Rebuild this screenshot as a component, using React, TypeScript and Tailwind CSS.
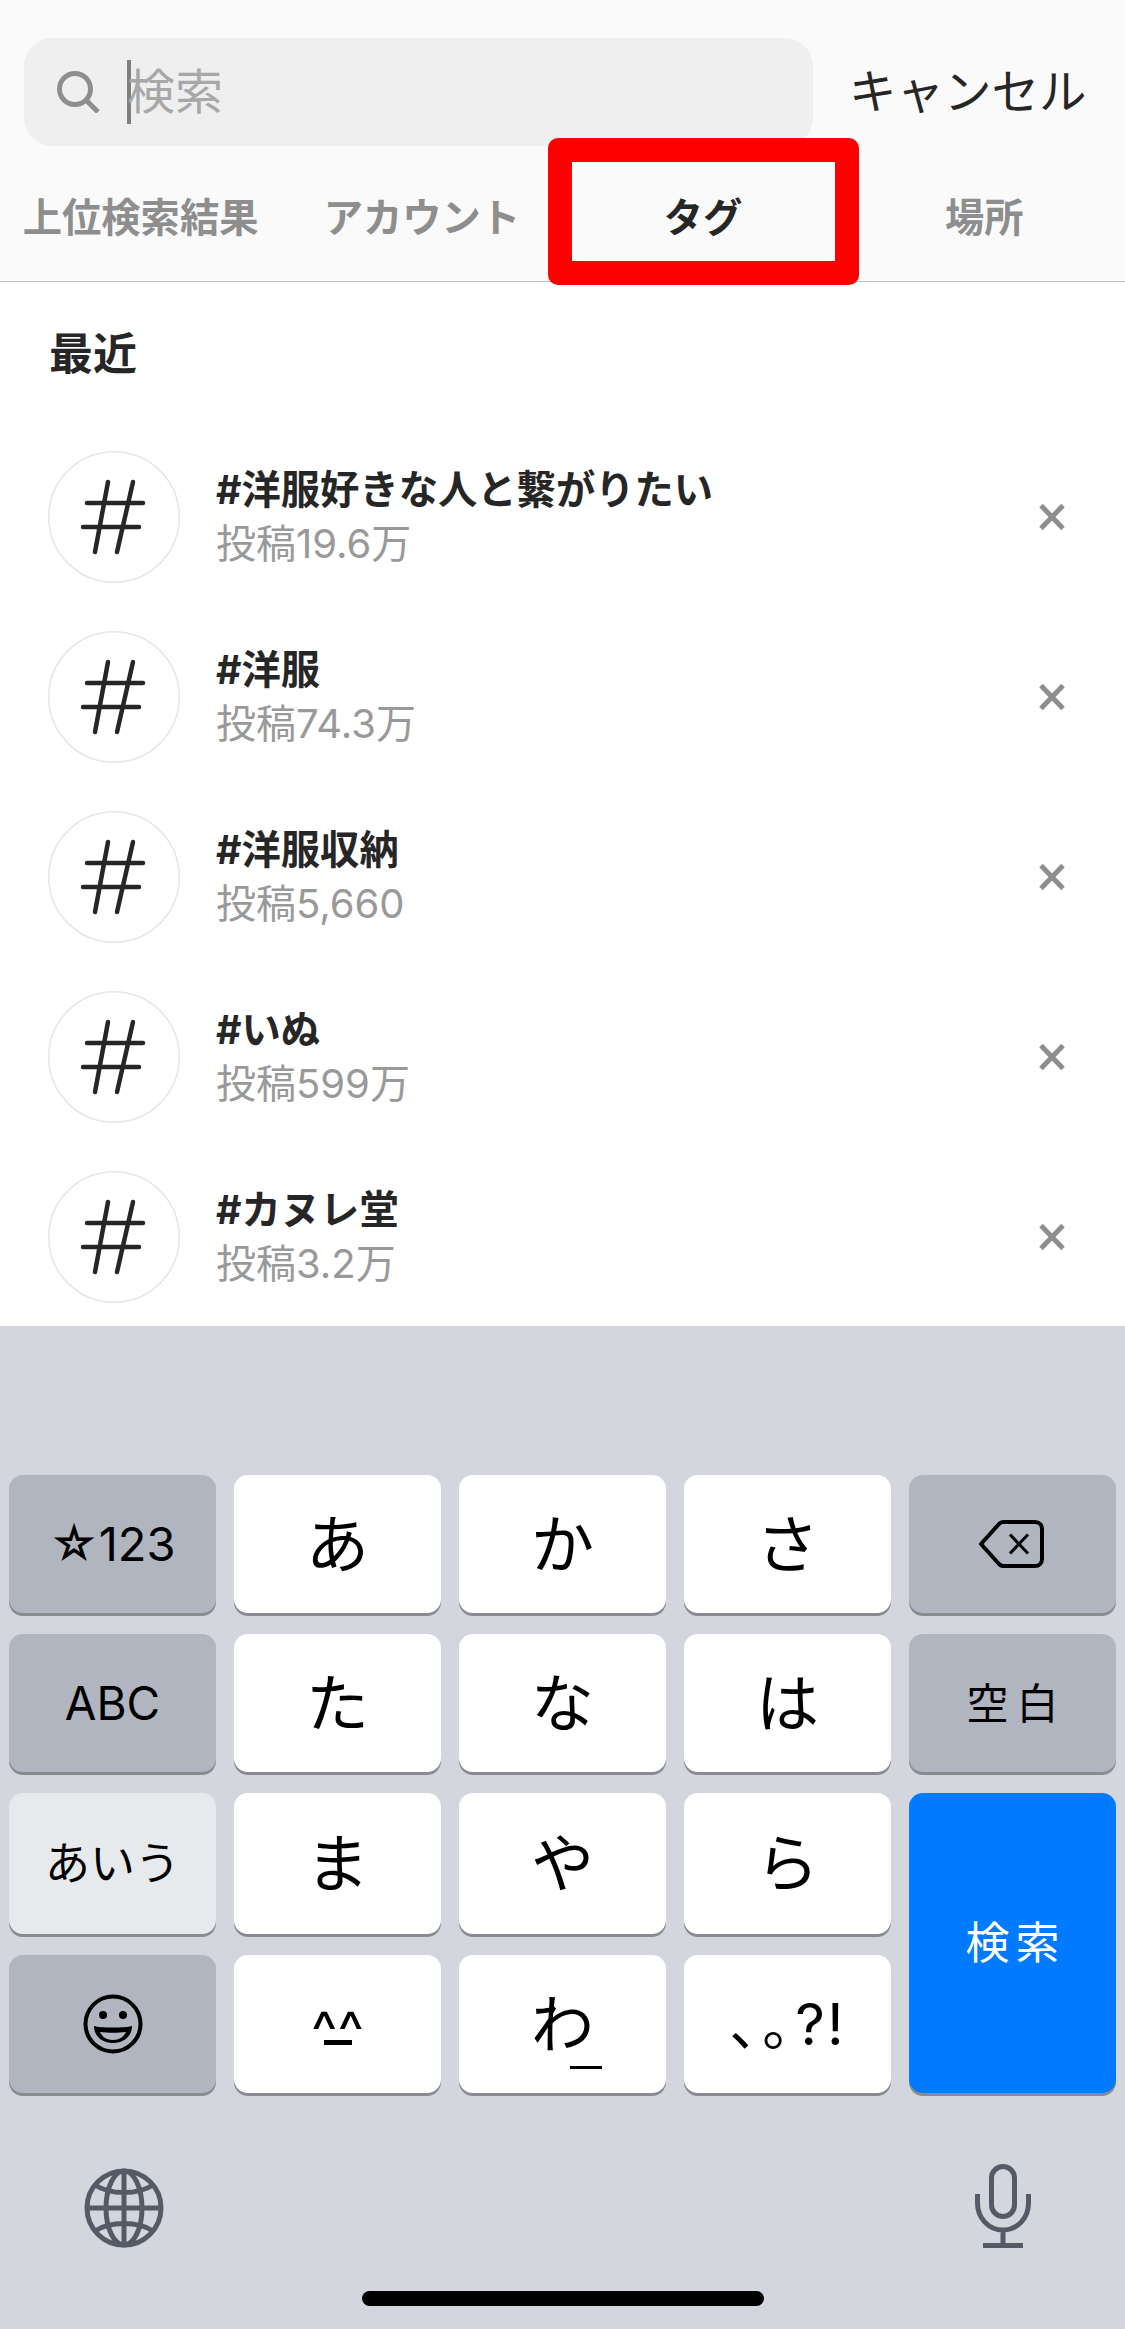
import React from 'react';

const recent = [
  { tag: '#洋服好きな人と繋がりたい', count: '投稿19.6万' },
  { tag: '#洋服', count: '投稿74.3万' },
  { tag: '#洋服収納', count: '投稿5,660' },
  { tag: '#いぬ', count: '投稿599万' },
  { tag: '#カヌレ堂', count: '投稿3.2万' },
];

const HashIcon = () => (
  <svg width="132" height="132" viewBox="0 0 132 132" fill="none" stroke="#262626" strokeWidth="4.5" strokeLinecap="round">
    <circle cx="66" cy="66" r="65.25" stroke="#e6e6e6" strokeWidth="1.5" />
    <path d="M60 31 47 101M85 31 69 101M39 52h56M35 76h56" />
  </svg>
);

const Row = ({ tag, count }: { tag: string; count: string }) => (
  <div className="flex h-[180px] items-center pl-12 pr-[60px]">
    <HashIcon />
    <div className="ml-[36px] flex-1">
      <div className="text-[39.3px] leading-[54px] font-bold text-[#262626]">{tag}</div>
      <div className="text-[40px] leading-[54px] text-[#999999]">{count}</div>
    </div>
    <svg width="26" height="26" viewBox="0 0 26 26" stroke="#8e8e8e" strokeWidth="5">
      <path d="M2 1.5 24 24.5M24 1.5 2 24.5" />
    </svg>
  </div>
);

const keyBase = 'flex items-center justify-center rounded-[14px] text-black shadow-[0_3px_0_#8a8b90]';
const whiteKey = `${keyBase} bg-white text-[63px]`;
const grayKey = `${keyBase} bg-[#b1b5c0] text-[46px]`;

export default function App() {
  return (
    <div className="relative flex h-[2329px] w-[1125px] flex-col overflow-hidden bg-white font-['Inter','Noto_Sans_CJK_JP',sans-serif]">
      <header className="h-[282px] border-b border-[#c0c0c0] bg-[#fafafa]">
        <div className="flex pl-6 pt-[38px]">
          <div className="flex h-[108px] w-[789px] items-center rounded-[28px] bg-[#efefef] pl-8">
            <svg width="44" height="42" viewBox="0 0 44 42" fill="none" stroke="#8e8e8e" strokeWidth="5">
              <circle cx="19" cy="18" r="15.5" />
              <path d="M30 29 42 41" />
            </svg>
            <div className="ml-[27px] h-16 w-1 bg-[#7f7f7f]" />
            <span className="-ml-1 text-[48px] text-[#a8a8a8]">検索</span>
          </div>
          <div className="ml-[36px] flex h-[108px] items-center text-[47.5px] text-[#262626]">キャンセル</div>
        </div>
        <div className="grid h-[135px] grid-cols-4 items-center pt-[10px] text-center text-[39.3px] font-bold text-[#8e8e8e]">
          <div>上位検索結果</div>
          <div>アカウント</div>
          <div className="text-[#262626]">タグ</div>
          <div>場所</div>
        </div>
      </header>

      {/* annotation frame over the tag tab */}
      <div className="absolute left-[548px] top-[138px] h-[147px] w-[311px] rounded-[10px] border-[24px] border-[#ff0000]" />

      <main className="h-[1044px]">
        <div className="h-[145px] pl-[49px] pt-[50px] text-[44px] leading-[44px] font-bold text-[#262626]">最近</div>
        {recent.map((r) => (
          <Row key={r.tag} tag={r.tag} count={r.count} />
        ))}
      </main>

      <section className="flex-1 bg-[#d3d6dd] px-[9px] pt-[149px]">
        <div className="grid grid-cols-[207px_207px_207px_207px_207px] grid-rows-[138px_138px_141px_138px] gap-x-[18px] gap-y-[21px]">
          <div className={`${grayKey} !text-[47px]`}>☆123</div>
          <div className={whiteKey}>あ</div>
          <div className={whiteKey}>か</div>
          <div className={whiteKey}>さ</div>
          <div className={grayKey}>
            <svg width="66" height="48" viewBox="0 0 66 48" fill="none" stroke="#000" strokeWidth="4" strokeLinejoin="round" className="-ml-1">
              <path d="M3 24 21 4c1-1 2-2 4-2h32c4 0 7 3 7 7v30c0 4-3 7-7 7H25c-2 0-3-1-4-2Z" />
              <path d="M32 14.5 50 33.5M50 14.5 32 33.5" strokeWidth="3" />
            </svg>
          </div>

          <div className={grayKey}>ABC</div>
          <div className={whiteKey}>た</div>
          <div className={whiteKey}>な</div>
          <div className={whiteKey}>は</div>
          <div className={`${grayKey} !text-[42px] pl-2 tracking-[8px]`}>空白</div>

          <div className={`${keyBase} bg-[#e6eaec] text-[45px]`}>あいう</div>
          <div className={whiteKey}>ま</div>
          <div className={whiteKey}>や</div>
          <div className={whiteKey}>ら</div>
          <div className={`${keyBase} row-span-2 bg-[#007aff] pl-[6px] text-[44px] tracking-[6px] !text-white`}>検索</div>

          <div className={grayKey}>
            <svg width="60" height="60" viewBox="0 0 60 60" fill="none" stroke="#000" strokeWidth="4">
              <circle cx="30" cy="30" r="27.5" />
              <circle cx="20" cy="21" r="4" fill="#000" stroke="none" />
              <circle cx="40" cy="21" r="4" fill="#000" stroke="none" />
              <path d="M11 32c6 2 32 2 38 0 0 10-8 17-19 17S11 42 11 32Z" fill="#000" stroke="none" />
              <path d="M17 38c8 1 18 1 26 0-2 5-7 8-13 8s-11-3-13-8Z" fill="#b1b5c0" stroke="none" />
            </svg>
          </div>
          <div className={`${keyBase} flex-col bg-white text-[56px]`}>
            <span className="h-[37px] leading-[56px]">^^</span>
            <span className="h-[5px] w-7 bg-black" />
          </div>
          <div className={`${keyBase} relative bg-white text-[63px]`}>
            わ
            <span className="absolute left-[111px] top-[111px] h-[3px] w-8 bg-black" />
          </div>
          <div className={`${keyBase} bg-white`}>
            <span className="text-[56px] tracking-[-23px] [text-spacing-trim:space-all]">
              、。<span className="text-[58px] tracking-[2px]">?!</span>
            </span>
          </div>
        </div>

        <div className="mt-[71px] flex h-[84px] items-end justify-between pl-[75px] pr-[85px]">
          <svg width="80" height="80" viewBox="0 0 80 80" fill="none" stroke="#555b66" strokeWidth="5">
            <circle cx="40" cy="40" r="37" />
            <ellipse cx="40" cy="40" rx="18" ry="37" />
            <path d="M40 3v74M3 40h74M11 17c15 10 43 10 58 0M11 63c15-10 43-10 58 0" />
          </svg>
          <svg width="56" height="84" viewBox="0 0 56 84" fill="none" stroke="#555b66" strokeWidth="5">
            <rect x="16.5" y="2.5" width="23" height="50" rx="11.5" />
            <path d="M2.5 30v9c0 15 11 27 25.5 27s25.5-12 25.5-27v-9M28 66v14" />
            <path d="M8 81.5h40" strokeWidth="5" />
          </svg>
        </div>

        <div className="mx-auto mt-[43px] h-[15px] w-[402px] rounded-full bg-black" />
      </section>
    </div>
  );
}
